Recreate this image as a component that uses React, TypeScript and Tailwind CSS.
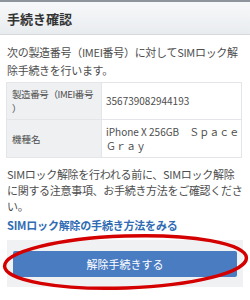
export default function App() {
  return (
    <div className="w-[250px] h-[300px] overflow-hidden bg-white text-[#4d4d4d] font-['Noto_Sans_CJK_JP',sans-serif]">
      <Header />
      <Body />
    </div>
  );
}

function Header() {
  return (
    <div className="border-t-2 border-[#8e949b] border-b border-b-[#d5d9dd] bg-gradient-to-b from-[#f7f8fa] to-[#e9ecef] h-[35px] flex items-center px-[7px]">
      <h1 className="text-[13px] font-bold text-[#333] leading-none pt-[1px]">手続き確認</h1>
    </div>
  );
}

function Body() {
  return (
    <div className="px-[7px] pt-[8px]">
      <p className="text-[11px] leading-[18px] tracking-[-0.3px] whitespace-nowrap">
        次の製造番号（IMEI番号）に対してSIMロック解
        <br />
        除手続きを行います。
      </p>
      <table className="mt-[3px] w-[236px] -ml-px table-fixed border-collapse text-[10px] leading-[14px]">
        <tbody>
          <tr className="h-[37px]">
            <th className="w-[95px] bg-[#eef0f2] border border-[#e3e5e8] font-normal text-left align-middle px-[5px] whitespace-nowrap text-[9.5px] tracking-[-0.4px]">
              製造番号（IMEI番号
              <br />）
            </th>
            <td className="border border-[#e3e5e8] px-[4px] align-middle">356739082944193</td>
          </tr>
          <tr className="h-[38px]">
            <th className="bg-[#eef0f2] border border-[#e3e5e8] font-normal text-left align-middle px-[5px] text-[9.5px]">
              機種名
            </th>
            <td className="border border-[#e3e5e8] px-[4px] align-middle whitespace-nowrap">
              iPhone X 256GB　Ｓｐａｃｅ
              <br />
              　Ｇｒａｙ
            </td>
          </tr>
        </tbody>
      </table>
      <p className="mt-[8px] text-[11px] leading-[16px] tracking-[-0.3px] whitespace-nowrap">
        SIMロック解除を行われる前に、SIMロック解除
        <br />
        に関する注意事項、お手続き方法をご確認くださ
        <br />
        い。
      </p>
      <a className="block mt-[3px] text-[11px] font-bold text-[#2f6cb3] leading-[16px] tracking-[-0.2px]">
        SIMロック解除の手続き方法をみる
      </a>
      <div className="relative mt-[7px] bg-[#f0f1f3] h-[47px] px-[6px] pt-[10px]">
        <button className="w-full h-[26px] bg-[#4a7cc2] text-white text-[11px] rounded-[2px]">
          解除手続きする
        </button>
        <svg className="absolute left-[-7px] top-[-8px] overflow-visible" width="250" height="60" viewBox="0 0 250 60">
          <ellipse cx="125.5" cy="30" rx="121" ry="26" fill="none" stroke="#d40000" strokeWidth="3.5" transform="rotate(-2 125.5 30)" />
        </svg>
      </div>
    </div>
  );
}
